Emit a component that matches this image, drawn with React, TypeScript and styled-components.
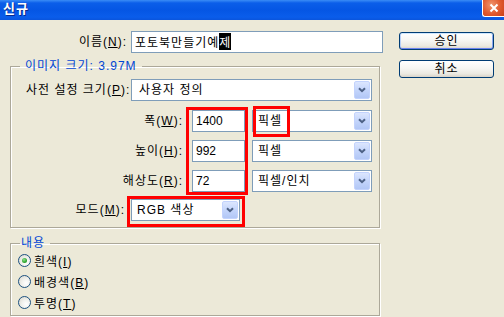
import React from "react";
import styled, { createGlobalStyle } from "styled-components";

const GlobalStyle = createGlobalStyle`
  html, body {
    margin: 0;
    padding: 0;
    background: #ece9d8;
  }

  body {
    font-family: "Liberation Sans", "Noto Sans CJK KR", sans-serif;
    font-size: 12px;
    letter-spacing: 1px;
    font-kerning: none;
    color: #000;
  }
`;

const Window = styled.div`
  width: 504px;
  height: 317px;
  overflow: hidden;
  background: #ece9d8;
  display: flex;
  flex-direction: column;
`;

const TitleBar = styled.div`
  height: 20px;
  flex: none;
  display: flex;
  align-items: flex-start;
  justify-content: space-between;
  background: linear-gradient(
    to bottom,
    #3a8cf6 0px,
    #0b5ee9 3px,
    #0556e4 10px,
    #0a5deb 17px,
    #0a55dd 20px
  );
`;

const TitleText = styled.span`
  color: #fff;
  font-weight: bold;
  font-size: 13px;
  line-height: 17px;
  padding-left: 3px;
  text-shadow: 1px 1px 0 #0a2a8c;
`;

const CloseButton = styled.span`
  width: 22px;
  height: 17px;
  box-sizing: border-box;
  border: 1px solid #fff;
  border-top: none;
  border-right: none;
  border-radius: 0 0 0 3px;
  background: radial-gradient(circle at 40% 30%, #f0956e 0%, #e0582d 55%, #c8401a 100%);
  display: flex;
  align-items: center;
  justify-content: center;
`;

const Body = styled.div`
  display: flex;
  padding: 11px 0 0 10px;
`;

const Form = styled.div`
  width: 373px;
  flex: none;
`;

const NameRow = styled.div`
  display: flex;
  align-items: center;
  height: 21px;
`;

const Label = styled.label<{ $width: number; $align?: "left" | "right"; $inset?: number }>`
  width: ${(p) => p.$width}px;
  flex: none;
  box-sizing: border-box;
  padding-left: ${(p) => p.$inset ?? 0}px;
  text-align: ${(p) => p.$align ?? "right"};
  white-space: nowrap;
  line-height: 22px;
  height: 22px;
`;

const TextBox = styled.div<{ $width: number; $numeric?: boolean }>`
  width: ${(p) => p.$width}px;
  height: 22px;
  flex: none;
  box-sizing: border-box;
  border: 1px solid #7f9db9;
  background: #fff;
  padding: 0 3px;
  display: flex;
  align-items: center;
  white-space: nowrap;
  overflow: hidden;
  letter-spacing: ${(p) => (p.$numeric ? "0" : "1px")};
`;

const Composing = styled.span`
  background: #000;
  color: #fff;
`;

const Combo = styled.div<{ $width: number }>`
  position: relative;
  width: ${(p) => p.$width}px;
  height: 22px;
  flex: none;
  box-sizing: border-box;
  border: 1px solid #7f9db9;
  background: #fff;
  padding: 1px;
  display: flex;
  align-items: stretch;
`;

const ComboValue = styled.span<{ $pad: number }>`
  flex: 1;
  padding-left: ${(p) => p.$pad}px;
  line-height: 18px;
  white-space: nowrap;
`;

const ComboButton = styled.span`
  width: 16px;
  box-sizing: border-box;
  border: 1px solid #c3d3fd;
  border-radius: 2px;
  background: linear-gradient(to bottom, #dce6fe 0%, #c4d5fb 50%, #b2c7f6 100%);
  display: flex;
  align-items: center;
  justify-content: center;
`;

const GroupBox = styled.fieldset<{ $gap: number; $bottom: number }>`
  margin: ${(p) => p.$gap}px 0 0 0;
  padding: 0 0 ${(p) => p.$bottom}px 0;
  width: 370px;
  min-width: 0;
  box-sizing: border-box;
  border: 1px solid #aca899;
  box-shadow: 1px 1px 0 #fff, inset 1px 1px 0 #fff;
`;

const GroupLegend = styled.legend<{ $lead: number }>`
  margin-left: 9px;
  padding: 0 5px 0 ${(p) => p.$lead}px;
  color: #0046d5;
  line-height: 14px;
  height: 14px;
`;

const PresetRow = styled.div`
  display: flex;
  align-items: center;
  margin-top: 6px;
`;

const DimBlock = styled.div`
  display: flex;
  margin-top: 6px;
`;

const Column = styled.div<{ $width: number }>`
  width: ${(p) => p.$width}px;
  flex: none;
  display: flex;
  flex-direction: column;
  gap: 8px;
  padding-top: 3px;
`;

const MarkFrame = styled.div`
  box-sizing: border-box;
  border: 3px solid #f00;
`;

const InputFrame = styled(MarkFrame)`
  width: 62px;
  margin-left: 3px;
  padding-left: 3px;
  display: flex;
  flex-direction: column;
  gap: 8px;
`;

const ModeFrame = styled(MarkFrame)`
  width: 118px;
  margin-left: 2px;
  padding: 0 2px 3px 1px;
`;

const UnitMark = styled(MarkFrame)`
  position: absolute;
  left: 0;
  top: -5px;
  width: 37px;
  height: 31px;
  pointer-events: none;
`;

const UnitColumn = styled(Column)`
  margin-left: 4px;
`;

const ModeRow = styled.div`
  display: flex;
  align-items: flex-start;
  margin-top: 1px;
`;

const ModeLabel = styled(Label)`
  padding-top: 3px;
`;

const RadioRow = styled.div`
  display: flex;
  align-items: center;
  height: 21px;
  padding-left: 7px;
  gap: 3px;
`;

const RadioDot = styled.span<{ $checked?: boolean }>`
  width: 13px;
  height: 13px;
  box-sizing: border-box;
  border-radius: 50%;
  border: 1px solid #1c5180;
  background: radial-gradient(circle at 65% 65%, #ffffff 0%, #f2f2ee 40%, #d6d4ca 100%);
  display: flex;
  align-items: center;
  justify-content: center;

  &::after {
    content: "";
    display: ${(p) => (p.$checked ? "block" : "none")};
    width: 5px;
    height: 5px;
    border-radius: 50%;
    background: radial-gradient(circle at 40% 35%, #8ee28e 0%, #2fa52f 60%, #1a7e1a 100%);
  }
`;

const Actions = styled.div`
  margin-left: 16px;
  padding-top: 1px;
  display: flex;
  flex-direction: column;
  gap: 10px;
`;

const Button = styled.button<{ $default?: boolean }>`
  width: 95px;
  height: 18px;
  box-sizing: border-box;
  padding: 0;
  border: 1px solid #003c74;
  border-radius: 3px;
  font: inherit;
  letter-spacing: 1px;
  line-height: 14px;
  color: #000;
  background: linear-gradient(to bottom, #ffffff 0%, #f6f6f3 45%, #ebe9e1 80%, #d8d3c8 100%);
  box-shadow: ${(p) =>
    p.$default
      ? "inset 0 1px 0 #cee7ff, inset 0 -1px 0 #6982ee, inset 1px 0 0 #b8d0f8, inset -1px 0 0 #8aa6ee"
      : "none"};
`;

const Chevron = () => (
  <svg width="8" height="6" viewBox="0 0 8 6">
    <path d="M1 1.2 L4 4.2 L7 1.2" fill="none" stroke="#4d6185" strokeWidth="2" />
  </svg>
);

const CloseGlyph = () => (
  <svg width="10" height="10" viewBox="0 0 10 10">
    <path d="M1.5 1.5 L8.5 8.5 M8.5 1.5 L1.5 8.5" stroke="#fff" strokeWidth="2" />
  </svg>
);

type SelectProps = { width: number; value: string; pad?: number; children?: React.ReactNode };

const Select = ({ width, value, pad = 4, children }: SelectProps) => (
  <Combo $width={width}>
    <ComboValue $pad={pad}>{value}</ComboValue>
    <ComboButton>
      <Chevron />
    </ComboButton>
    {children}
  </Combo>
);

const dims = [
  { label: "폭", key: "W", value: "1400", unit: "픽셀" },
  { label: "높이", key: "H", value: "992", unit: "픽셀" },
  { label: "해상도", key: "R", value: "72", unit: "픽셀/인치" },
];

const fills = [
  { label: "흰색", key: "I", checked: true },
  { label: "배경색", key: "B" },
  { label: "투명", key: "T" },
];

export default function App() {
  return (
    <>
      <GlobalStyle />
      <Window>
        <TitleBar>
          <TitleText>신규</TitleText>
          <CloseButton>
            <CloseGlyph />
          </CloseButton>
        </TitleBar>

        <Body>
          <Form>
            <NameRow>
              <Label $width={117}>
                이름(<u>N</u>):
              </Label>
              <TextBox $width={252} style={{ marginLeft: 4 }}>
                포토북만들기예<Composing>제</Composing>
              </TextBox>
            </NameRow>

            <GroupBox $gap={7} $bottom={0}>
              <GroupLegend $lead={5}>이미지 크기: 3.97M</GroupLegend>

              <PresetRow>
                <Label $width={120} $align="left" $inset={15}>
                  사전 설정 크기(<u>P</u>):
                </Label>
                <Select width={241} value="사용자 정의" pad={6} />
              </PresetRow>

              <DimBlock>
                <Column $width={172}>
                  {dims.map((d) => (
                    <Label key={d.key} $width={172}>
                      {d.label}(<u>{d.key}</u>):
                    </Label>
                  ))}
                </Column>
                <InputFrame>
                  {dims.map((d) => (
                    <TextBox key={d.key} $width={53} $numeric>
                      {d.value}
                    </TextBox>
                  ))}
                </InputFrame>
                <UnitColumn $width={120}>
                  {dims.map((d, i) => (
                    <Select key={d.key} width={120} value={d.unit}>
                      {i === 0 && <UnitMark />}
                    </Select>
                  ))}
                </UnitColumn>
              </DimBlock>

              <ModeRow>
                <ModeLabel $width={114}>
                  모드(<u>M</u>):
                </ModeLabel>
                <ModeFrame>
                  <Select width={109} value="RGB 색상" />
                </ModeFrame>
              </ModeRow>
            </GroupBox>

            <GroupBox $gap={8} $bottom={2}>
              <GroupLegend $lead={1}>내용</GroupLegend>
              {fills.map((f) => (
                <RadioRow key={f.key}>
                  <RadioDot $checked={f.checked} />
                  <span>
                    {f.label}(<u>{f.key}</u>)
                  </span>
                </RadioRow>
              ))}
            </GroupBox>
          </Form>

          <Actions>
            <Button $default>승인</Button>
            <Button>취소</Button>
          </Actions>
        </Body>
      </Window>
    </>
  );
}
